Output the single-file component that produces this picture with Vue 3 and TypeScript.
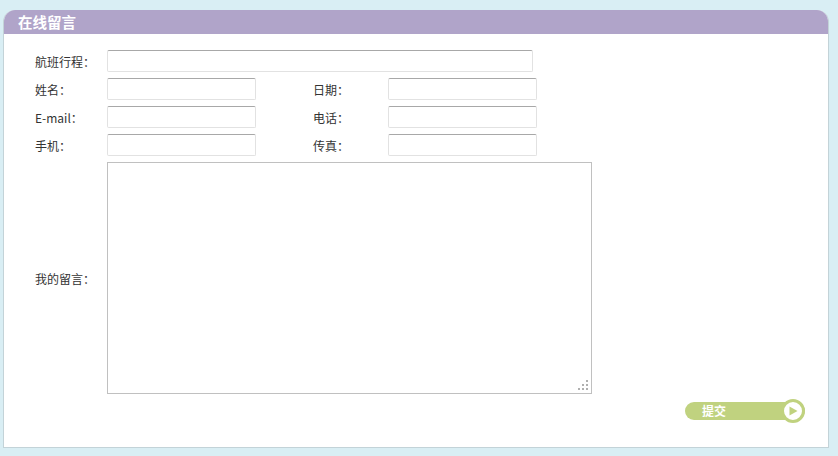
<template>
  <div class="page">
    <section class="panel">
      <h2 class="panel-title">在线留言</h2>
      <form class="message-form" @submit.prevent>
        <div class="row">
          <label class="label">航班行程：</label>
          <input class="field field-wide" type="text" />
        </div>
        <div v-for="row in pairRows" :key="row[0]" class="row">
          <label class="label">{{ row[0] }}</label>
          <input class="field" type="text" />
          <label class="label label-second">{{ row[1] }}</label>
          <input class="field" type="text" />
        </div>
        <div class="row row-message">
          <label class="label">我的留言：</label>
          <div class="message-box">
            <svg class="grip" width="11" height="11" viewBox="0 0 11 11">
              <rect x="8" y="0" width="2" height="2" />
              <rect x="4" y="4" width="2" height="2" />
              <rect x="8" y="4" width="2" height="2" />
              <rect x="0" y="8" width="2" height="2" />
              <rect x="4" y="8" width="2" height="2" />
              <rect x="8" y="8" width="2" height="2" />
            </svg>
          </div>
        </div>
        <div class="actions">
          <button class="submit" type="submit">
            <span class="submit-text">提交</span>
            <span class="submit-icon">
              <svg width="14" height="14" viewBox="0 0 14 14">
                <path d="M3.5 2.5 L11.5 7 L3.5 11.5 Z" fill="#c0d27f" />
              </svg>
            </span>
          </button>
        </div>
      </form>
    </section>
  </div>
</template>

<script setup lang="ts">
const pairRows: [string, string][] = [
  ['姓名：', '日期：'],
  ['E-mail：', '电话：'],
  ['手机：', '传真：'],
];
</script>

<style>
html,
body {
  margin: 0;
  background: #d9eef4;
}
</style>

<style scoped>
.page {
  width: 838px;
  height: 456px;
  box-sizing: border-box;
  padding: 10px 9px 8px 3px;
  font-family: "Noto Sans CJK SC", "Liberation Sans", sans-serif;
  font-size: 12px;
  color: #333;
}

.panel {
  height: 100%;
  box-sizing: border-box;
  background: #fff;
  border: 1px solid #c3d3d8;
  border-top: 0;
  border-radius: 12px 12px 0 0;
  overflow: hidden;
}

.panel-title {
  margin: 0;
  height: 24px;
  padding-left: 14px;
  background: #b0a4c9;
  color: #fff;
  font-size: 14.5px;
  font-weight: 700;
  line-height: 23px;
}

.message-form {
  padding: 16px 0 0 31px;
}

.row {
  display: flex;
  align-items: center;
  height: 22px;
  margin-bottom: 6px;
}

.label {
  width: 72px;
  flex: none;
}

.label-second {
  width: 75px;
  margin-left: 57px;
}

.field {
  width: 149px;
  height: 22px;
  box-sizing: border-box;
  margin: 0;
  padding: 0 4px;
  background: #fff;
  border: 1px solid #e2e2e2;
  border-top-color: #a8a8a8;
  border-radius: 2px;
  outline: none;
}

.field-wide {
  width: 426px;
}

.row-message {
  height: 232px;
  margin-bottom: 8px;
}

.message-box {
  position: relative;
  width: 485px;
  height: 232px;
  box-sizing: border-box;
  border: 1px solid #c0c0c0;
}

.grip {
  position: absolute;
  right: 2px;
  bottom: 2px;
  fill: #b0b0b0;
}

.actions {
  display: flex;
  justify-content: flex-end;
  padding-right: 23px;
}

.submit {
  display: flex;
  align-items: center;
  width: 120px;
  height: 18px;
  margin: 0;
  padding: 0;
  background: #c0d27f;
  border: 0;
  border-radius: 9px;
  color: #fff;
  font: 700 12px "Noto Sans CJK SC", "Liberation Sans", sans-serif;
  overflow: visible;
  position: relative;
}

.submit-text {
  margin: -2px 0 0 17px;
}

.submit-icon {
  position: absolute;
  right: 0;
  top: -3px;
  display: flex;
  align-items: center;
  justify-content: center;
  width: 24px;
  height: 24px;
  box-sizing: border-box;
  background: #fff;
  border: 3px solid #c0d27f;
  border-radius: 50%;
}
</style>
